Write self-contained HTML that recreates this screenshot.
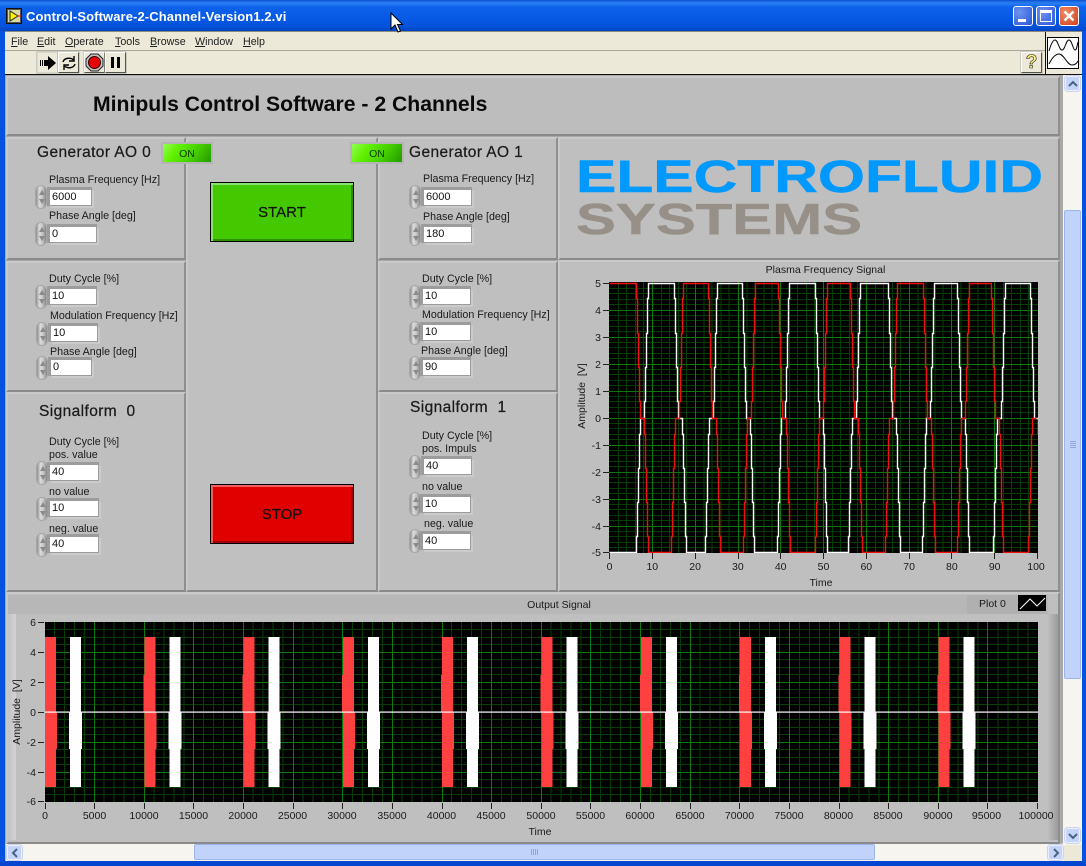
<!DOCTYPE html>
<html><head><meta charset="utf-8"><style>
*{box-sizing:border-box}
html,body{margin:0;padding:0;width:1086px;height:866px;overflow:hidden;background:#c0c0c0}
body{position:relative;font-family:"Liberation Sans",sans-serif;font-size:11px;color:#111}
div,span.a{position:absolute}
.b{background:#bfbfbf;border:2px solid;border-color:#c9c9c9 #8f8f8f #8a8a8a #c9c9c9}
.l{white-space:nowrap;line-height:14px;height:14px;font-size:10.7px;color:#1a1a1a;margin-top:1px}
.h{white-space:nowrap;font-size:15.5px;line-height:18px;height:18px;color:#1a1a1a;letter-spacing:.4px;-webkit-text-stroke:.25px #222;margin-top:1px}
.f{background:#fff;height:15px;line-height:15px;padding-left:2px;font-size:11px;box-shadow:-1px -1px 0 2px #9c9c9c,2px 2px 0 1px #cbcbcb}
.s{width:12px;height:24px;border-radius:6px;background:linear-gradient(90deg,#8f8f8f,#dcdcdc 35%,#c4c4c4 65%,#858585);border:1px solid #a5a5a5}
.s:before{content:"";position:absolute;left:3px;top:4px;border:3px solid transparent;border-bottom:5px solid #8a8a8a;border-top:0}
.s:after{content:"";position:absolute;left:3px;bottom:4px;border:3px solid transparent;border-top:5px solid #8a8a8a;border-bottom:0}
.m{top:35px;font-size:10.7px;line-height:14px;color:#222;font-family:"Liberation Sans",sans-serif}
.m u{text-decoration:underline}
.tb{width:21px;height:21px;top:52px;background:#ece9d8;border:1px solid;border-color:#fff #55534a #55534a #fff;box-shadow:0 0 0 .5px #aaa}
.led{height:18px;background:linear-gradient(125deg,#90ff50 0,#60f000 30%,#44cc00 65%,#239a00 100%);text-align:center;line-height:20px;font-size:10.5px;color:#0a3a00;box-shadow:0 0 0 2px #b4b4b4}
.big{left:210px;width:144px;height:60px;border:1px solid #000;text-align:center;font-size:15px;line-height:60px;color:#111;-webkit-text-stroke:.2px #111}
.bar{background:#c1d3fb;border:1px solid #9db4e8;border-radius:2px}
.sb{background:#c5d5f8;border:1px solid #eef;border-radius:2px;box-shadow:0 0 0 .5px #9db4e8;color:#4d6185}
svg text{font-family:"Liberation Sans",sans-serif;font-size:10.5px;fill:#1a1a1a}
.w{border-radius:3px;border:1px solid #fff;width:20px;height:20px;top:6px}
</style></head><body>

<div style="left:0;top:0;width:1086px;height:31px;background:linear-gradient(180deg,#0a50d0 0,#2a80f4 3px,#0e62ea 7px,#0658e4 20px,#0350d8 27px,#0244c0 31px)"></div>
<div style="left:0;top:31px;width:5px;height:835px;background:#0652e0"></div>
<div style="left:1082px;top:31px;width:4px;height:835px;background:#0652e0"></div>
<div style="left:0;top:861px;width:1086px;height:5px;background:#0446d0"></div>

<svg style="position:absolute;left:6px;top:8px" width="17" height="17"><rect x=".5" y=".5" width="15" height="15" fill="#555" stroke="#111"/><rect x="2" y="2" width="12" height="12" fill="#d8d8a0"/><path d="M4 3V13L12 8Z" fill="#fff200" stroke="#222"/><path d="M11 8h5" stroke="#e00"/></svg>
<div style="left:26px;top:8px;color:#fff;font-weight:bold;font-size:13px;line-height:17px;white-space:nowrap;letter-spacing:.1px">Control-Software-2-Channel-Version1.2.vi</div>

<div class="w" style="left:1013px;background:radial-gradient(circle at 30% 30%,#6d93ee,#2a56d8)"><div style="left:4px;top:12px;width:8px;height:3px;background:#fff"></div></div>
<div class="w" style="left:1036px;background:radial-gradient(circle at 30% 30%,#6d93ee,#2a56d8)"><div style="left:3px;top:3px;width:12px;height:12px;border:1px solid #fff;border-top-width:3px"></div></div>
<div class="w" style="left:1059px;background:radial-gradient(circle at 30% 30%,#ef8a66,#d0401c)"><svg style="position:absolute;left:3px;top:3px" width="12" height="12"><path d="M1.5 1.5L10.5 10.5M10.5 1.5L1.5 10.5" stroke="#fff" stroke-width="2.4"/></svg></div>

<div style="left:5px;top:31px;width:1077px;height:44px;background:#ece9d8;border-top:1px solid #8c8a80"></div>
<div style="left:5px;top:50px;width:1040px;height:1px;background:#aca899"></div>
<div style="left:5px;top:74px;width:1077px;height:1px;background:#111"></div>
<div style="left:1045px;top:32px;width:1px;height:42px;background:#111"></div>
<div class="m" style="left:11px"><u>F</u>ile</div>
<div class="m" style="left:37px"><u>E</u>dit</div>
<div class="m" style="left:65px"><u>O</u>perate</div>
<div class="m" style="left:115px"><u>T</u>ools</div>
<div class="m" style="left:150px"><u>B</u>rowse</div>
<div class="m" style="left:195px"><u>W</u>indow</div>
<div class="m" style="left:243px"><u>H</u>elp</div>

<div class="tb" style="left:37px;border-color:#d8d6c8"><svg style="position:absolute;left:1px;top:2px" width="18" height="16"><path d="M9 1L17 8L9 15V11H6V5H9Z" fill="#000"/><path d="M1 5h1v6H1zM3 5h1v6H3zM5 5h1v6H5z" fill="#000"/></svg></div>
<div class="tb" style="left:58px"><svg style="position:absolute;left:1px;top:1px" width="18" height="18" fill="none" stroke="#000" stroke-width="1.4"><path d="M3 8C4 4 10 3 14 6"/><path d="M15 10C14 14 8 15 4 12"/><path d="M14 2V7H9M4 16V11H9"/></svg></div>
<div class="tb" style="left:84px"><svg style="position:absolute;left:0;top:0" width="19" height="19"><path d="M6 1H13L18 6V13L13 18H6L1 13V6Z" fill="#c4c4c4" stroke="#222"/><circle cx="9.5" cy="9.5" r="6" fill="#e80000" stroke="#300"/></svg></div>
<div class="tb" style="left:105px"><div style="left:5px;top:4px;width:3px;height:11px;background:#000"></div><div style="left:11px;top:4px;width:3px;height:11px;background:#000"></div></div>
<div class="tb" style="left:1021px"><div style="left:0;top:0;width:19px;height:19px;text-align:center;font-weight:bold;font-size:19px;line-height:19px;color:#fff27a;-webkit-text-stroke:.6px #222">?</div></div>
<svg style="position:absolute;left:1047px;top:37px" width="32" height="32"><rect x=".5" y=".5" width="31" height="31" fill="#fff" stroke="#000"/><path d="M2 14C4 7 6 3 8 3C11 3 12 13 15 13C18 13 19 3 22 3C25 3 26 13 28 13C30 13 30 8 31 5" fill="none" stroke="#000"/><path d="M2 27C5 21 8 17 12 17C17 17 20 28 25 28C28 28 30 26 31 24" fill="none" stroke="#000"/></svg>

<div style="left:5px;top:75px;width:1058px;height:768px;background:#a8a8a8"></div>
<div class="b" style="left:6px;top:76px;width:1054px;height:60px;background:#bdbdbd"></div>
<div style="left:93px;top:92px;font-size:21.2px;font-weight:bold;line-height:26px;white-space:nowrap;color:#0a0a0a">Minipuls Control Software - 2 Channels</div>

<div class="b" style="left:6px;top:137px;width:180px;height:123px"></div>
<div class="b" style="left:6px;top:261px;width:180px;height:131px"></div>
<div class="b" style="left:6px;top:392px;width:180px;height:200px"></div>
<div class="b" style="left:186px;top:137px;width:192px;height:455px;background:#c0c0c0"></div>
<div class="b" style="left:378px;top:137px;width:180px;height:123px"></div>
<div class="b" style="left:378px;top:261px;width:180px;height:131px"></div>
<div class="b" style="left:378px;top:392px;width:180px;height:200px"></div>
<div class="b" style="left:558px;top:137px;width:502px;height:123px"></div>
<div class="b" style="left:558px;top:260px;width:502px;height:332px"></div>
<div class="b" style="left:6px;top:592px;width:1054px;height:252px"></div>
<div style="left:8px;top:595px;width:1040px;height:19px;background:#b7b7b7"></div>
<div style="left:8px;top:614px;width:8px;height:226px;background:linear-gradient(90deg,#c4c4c4,#d2d2d2)"></div>
<div style="left:1040px;top:614px;width:18px;height:226px;background:linear-gradient(90deg,#c0c0c0 40%,#9c9c9c)"></div>

<!-- Left controls -->
<div class="h" style="left:37px;top:143px">Generator AO 0</div>
<div class="led" style="left:163px;top:144px;width:48px">ON</div>
<div class="l" style="left:49px;top:172px">Plasma Frequency [Hz]</div>
<div class="s" style="left:35px;top:185px"></div><div class="f" style="left:50px;top:190px;width:41px">6000</div>
<div class="l" style="left:49px;top:208px">Phase Angle [deg]</div>
<div class="s" style="left:35px;top:222px"></div><div class="f" style="left:50px;top:227px;width:46px">0</div>

<div class="l" style="left:49px;top:271px">Duty Cycle [%]</div>
<div class="s" style="left:35px;top:285px"></div><div class="f" style="left:50px;top:289px;width:46px">10</div>
<div class="l" style="left:50px;top:308px">Modulation Frequency [Hz]</div>
<div class="s" style="left:36px;top:322px"></div><div class="f" style="left:51px;top:326px;width:46px">10</div>
<div class="l" style="left:50px;top:344px">Phase Angle [deg]</div>
<div class="s" style="left:36px;top:356px"></div><div class="f" style="left:51px;top:360px;width:40px">0</div>

<div class="h" style="left:39px;top:402px">Signalform&nbsp; 0</div>
<div class="l" style="left:49px;top:434px">Duty Cycle [%]</div>
<div class="l" style="left:49px;top:447px">pos. value</div>
<div class="s" style="left:36px;top:461px"></div><div class="f" style="left:50px;top:465px;width:48px">40</div>
<div class="l" style="left:49px;top:484px">no value</div>
<div class="s" style="left:36px;top:497px"></div><div class="f" style="left:50px;top:501px;width:48px">10</div>
<div class="l" style="left:49px;top:521px">neg. value</div>
<div class="s" style="left:36px;top:533px"></div><div class="f" style="left:50px;top:537px;width:48px">40</div>

<!-- Center -->
<div class="led" style="left:352px;top:144px;width:50px">ON</div>
<div class="big" style="top:182px;background:#44c800;box-shadow:inset 2px 2px 0 #88e070,inset -2px -2px 0 #2c9000">START</div>
<div class="big" style="top:484px;background:#e00000;box-shadow:inset 2px 2px 0 #ee6060,inset -2px -2px 0 #a00000">STOP</div>

<!-- Right controls -->
<div class="h" style="left:409px;top:143px">Generator AO 1</div>
<div class="l" style="left:423px;top:171px">Plasma Frequency [Hz]</div>
<div class="s" style="left:409px;top:185px"></div><div class="f" style="left:424px;top:190px;width:47px">6000</div>
<div class="l" style="left:423px;top:209px">Phase Angle [deg]</div>
<div class="s" style="left:409px;top:222px"></div><div class="f" style="left:424px;top:227px;width:47px">180</div>

<div class="l" style="left:422px;top:271px">Duty Cycle [%]</div>
<div class="s" style="left:409px;top:285px"></div><div class="f" style="left:423px;top:289px;width:47px">10</div>
<div class="l" style="left:422px;top:307px">Modulation Frequency [Hz]</div>
<div class="s" style="left:409px;top:321px"></div><div class="f" style="left:423px;top:325px;width:47px">10</div>
<div class="l" style="left:421px;top:343px">Phase Angle [deg]</div>
<div class="s" style="left:409px;top:356px"></div><div class="f" style="left:423px;top:360px;width:47px">90</div>

<div class="h" style="left:410px;top:398px">Signalform&nbsp; 1</div>
<div class="l" style="left:422px;top:428px">Duty Cycle [%]</div>
<div class="l" style="left:422px;top:441px">pos. Impuls</div>
<div class="s" style="left:409px;top:455px"></div><div class="f" style="left:424px;top:459px;width:47px">40</div>
<div class="l" style="left:422px;top:479px">no value</div>
<div class="s" style="left:409px;top:492px"></div><div class="f" style="left:423px;top:497px;width:47px">10</div>
<div class="l" style="left:424px;top:516px">neg. value</div>
<div class="s" style="left:409px;top:529px"></div><div class="f" style="left:423px;top:534px;width:47px">40</div>

<!-- Graphics -->
<svg style="position:absolute;left:0;top:0" width="1086" height="866">
<defs>
<path id="v1" d="M618.5 282V553M626.5 282V553M635.5 282V553M643.5 282V553" stroke="#063f06" shape-rendering="crispEdges"/>
<path id="h1" d="M609 288.5H1038M609 293.5H1038M609 299.5H1038M609 304.5H1038" stroke="#063f06" shape-rendering="crispEdges"/>
<path id="v2" d="M54.5 622V802M64.5 622V802M74.5 622V802M84.5 622V802" stroke="#063f06" shape-rendering="crispEdges"/>
<path id="h2" d="M45 629.5H1038M45 637.5H1038M45 644.5H1038" stroke="#063f06" shape-rendering="crispEdges"/>
<clipPath id="c1"><rect x="609" y="281" width="429" height="272"/></clipPath>
<clipPath id="c2"><rect x="45" y="622" width="993" height="180"/></clipPath>
<g id="br" fill="#ff4040" shape-rendering="crispEdges"><rect x="45" y="637" width="11" height="150"/><rect x="44" y="675" width="12" height="37"/><rect x="45" y="712" width="12" height="37"/></g>
<g id="bw" fill="#fff" shape-rendering="crispEdges"><rect x="70" y="637" width="11" height="150"/><rect x="69" y="712" width="13" height="37"/></g>
<g id="bb"><use href="#br"/><use href="#bw"/></g>
</defs>

<!-- Logo -->
<text x="576" y="192" textLength="467" lengthAdjust="spacingAndGlyphs" style="font-size:45px;font-weight:bold;fill:#0099ff;stroke:#0099ff;stroke-width:.5px">ELECTROFLUID</text>
<text x="576" y="234" textLength="286" lengthAdjust="spacingAndGlyphs" style="font-size:44px;font-weight:bold;fill:#979088;stroke:#979088;stroke-width:.5px">SYSTEMS</text>

<!-- Top plot -->
<text x="825.5" y="273" text-anchor="middle">Plasma Frequency Signal</text>
<rect x="609" y="282" width="429" height="271" fill="#000"/>
<use href="#v1"/><use href="#v1" x="42.8"/><use href="#v1" x="85.6"/><use href="#v1" x="128.4"/><use href="#v1" x="171.2"/><use href="#v1" x="214"/><use href="#v1" x="256.8"/><use href="#v1" x="299.6"/><use href="#v1" x="342.4"/><use href="#v1" x="385.2"/>
<use href="#h1"/><use href="#h1" y="27"/><use href="#h1" y="54"/><use href="#h1" y="81"/><use href="#h1" y="108"/><use href="#h1" y="135"/><use href="#h1" y="162"/><use href="#h1" y="189"/><use href="#h1" y="216"/><use href="#h1" y="243"/>
<path d="M652.5 282V553M695.5 282V553M738.5 282V553M780.5 282V553M823.5 282V553M866.5 282V553M909.5 282V553M951.5 282V553M994.5 282V553M609 310.5H1038M609 337.5H1038M609 364.5H1038M609 391.5H1038M609 418.5H1038M609 445.5H1038M609 472.5H1038M609 499.5H1038M609 526.5H1038" stroke="#0a7a0a" shape-rendering="crispEdges"/>
<g clip-path="url(#c1)" fill="none" stroke-width="1.4">
<path stroke="#fff" d="M609.5 552.5H636.5
v-16h1v-34h1v-34h1v-34h1v-16h4v-17h1v-34h1v-34h1v-35h1v-15H674.5
v15h1v35h1v34h1v34h1v17h4v16h1v34h1v34h1v34h1v16H705.5
v-16h1v-34h1v-34h1v-34h1v-16h4v-17h1v-34h1v-34h1v-35h1v-15H742.5
v15h1v35h1v34h1v34h1v17h4v16h1v34h1v34h1v34h1v16H777.5
v-16h1v-34h1v-34h1v-34h1v-16h4v-17h1v-34h1v-34h1v-35h1v-15H815.5
v15h1v35h1v34h1v34h1v17h4v16h1v34h1v34h1v34h1v16H848.5
v-16h1v-34h1v-34h1v-34h1v-16h4v-17h1v-34h1v-34h1v-35h1v-15H888.5
v15h1v35h1v34h1v34h1v17h4v16h1v34h1v34h1v34h1v16H922.5
v-16h1v-34h1v-34h1v-34h1v-16h4v-17h1v-34h1v-34h1v-35h1v-15H957.5
v15h1v35h1v34h1v34h1v17h4v16h1v34h1v34h1v34h1v16H993.5
v-16h1v-34h1v-34h1v-34h1v-16h4v-17h1v-34h1v-34h1v-35h1v-15H1030.5
v15h1v35h1v34h1v34h1v17h4v16"/>
<path stroke="#f01010" d="M609.5 283.5H636.5
v15h1v35h1v34h1v34h1v17h4v16h1v34h1v34h1v34h1v16H671.5
v-16h1v-34h1v-34h1v-34h1v-16h4v-17h1v-34h1v-34h1v-35h1v-15H708.5
v15h1v35h1v34h1v34h1v17h4v16h1v34h1v34h1v34h1v16H743.5
v-16h1v-34h1v-34h1v-34h1v-16h4v-17h1v-34h1v-34h1v-35h1v-15H778.5
v15h1v35h1v34h1v34h1v17h4v16h1v34h1v34h1v34h1v16H815.5
v-16h1v-34h1v-34h1v-34h1v-16h4v-17h1v-34h1v-34h1v-35h1v-15H850.5
v15h1v35h1v34h1v34h1v17h4v16h1v34h1v34h1v34h1v16H885.5
v-16h1v-34h1v-34h1v-34h1v-16h4v-17h1v-34h1v-34h1v-35h1v-15H923.5
v15h1v35h1v34h1v34h1v17h4v16h1v34h1v34h1v34h1v16H957.5
v-16h1v-34h1v-34h1v-34h1v-16h4v-17h1v-34h1v-34h1v-35h1v-15H991.5
v15h1v35h1v34h1v34h1v17h4v16h1v34h1v34h1v34h1v16H1028.5
v-16h1v-34h1v-34h1v-34h1v-16h4"/>
</g>
<path d="M603 283.5h6M603 310.5h6M603 337.5h6M603 364.5h6M603 391.5h6M603 418.5h6M603 445.5h6M603 472.5h6M603 499.5h6M603 526.5h6M603 552.5h6M609.5 553v6M652.5 553v6M695.5 553v6M738.5 553v6M780.5 553v6M823.5 553v6M866.5 553v6M909.5 553v6M951.5 553v6M994.5 553v6M1037.5 553v6" stroke="#222" fill="none"/>
<g text-anchor="end"><text x="601" y="287">5</text><text x="601" y="314">4</text><text x="601" y="341">3</text><text x="601" y="368">2</text><text x="601" y="395">1</text><text x="601" y="422">0</text><text x="601" y="449">-1</text><text x="601" y="476">-2</text><text x="601" y="503">-3</text><text x="601" y="530">-4</text><text x="601" y="556">-5</text></g>
<g text-anchor="middle"><text x="609.5" y="570">0</text><text x="652.3" y="570">10</text><text x="695.1" y="570">20</text><text x="737.9" y="570">30</text><text x="780.7" y="570">40</text><text x="823.5" y="570">50</text><text x="866.3" y="570">60</text><text x="909.1" y="570">70</text><text x="951.9" y="570">80</text><text x="994.7" y="570">90</text><text x="1036" y="570">100</text><text x="821" y="586">Time</text></g>
<text transform="translate(585,396) rotate(-90)" text-anchor="middle">Amplitude&nbsp; [V]</text>

<!-- Bottom plot -->
<text x="559" y="608" text-anchor="middle">Output Signal</text>
<rect x="967" y="595" width="79" height="19" fill="#b0b0b0"/>
<text x="979" y="607">Plot 0</text>
<rect x="1018" y="595" width="28" height="16" fill="#000"/>
<path d="M1020 609L1030 599L1037 606L1045 598" fill="none" stroke="#fff"/>
<rect x="45" y="622" width="993" height="180" fill="#000"/>
<use href="#v2"/><use href="#v2" x="49.65"/><use href="#v2" x="99.3"/><use href="#v2" x="148.95"/><use href="#v2" x="198.6"/><use href="#v2" x="248.25"/><use href="#v2" x="297.9"/><use href="#v2" x="347.55"/><use href="#v2" x="397.2"/><use href="#v2" x="446.85"/><use href="#v2" x="496.5"/><use href="#v2" x="546.15"/><use href="#v2" x="595.8"/><use href="#v2" x="645.45"/><use href="#v2" x="695.1"/><use href="#v2" x="744.75"/><use href="#v2" x="794.4"/><use href="#v2" x="844.05"/><use href="#v2" x="893.7"/><use href="#v2" x="943.35"/>
<use href="#h2"/><use href="#h2" y="30"/><use href="#h2" y="60"/><use href="#h2" y="90"/><use href="#h2" y="120"/><use href="#h2" y="150"/>
<path d="M94.5 622V802M144.5 622V802M193.5 622V802M243.5 622V802M293.5 622V802M342.5 622V802M392.5 622V802M442.5 622V802M491.5 622V802M541.5 622V802M590.5 622V802M640.5 622V802M690.5 622V802M739.5 622V802M789.5 622V802M839.5 622V802M888.5 622V802M938.5 622V802M987.5 622V802M45 652.5H1038M45 682.5H1038M45 742.5H1038M45 772.5H1038" stroke="#0a7a0a" shape-rendering="crispEdges"/>
<g clip-path="url(#c2)">
<use href="#bb"/><use href="#bb" x="99.3"/><use href="#bb" x="198.6"/><use href="#bb" x="297.9"/><use href="#bb" x="397.2"/><use href="#bb" x="496.5"/><use href="#bb" x="595.8"/><use href="#bb" x="695.1"/><use href="#bb" x="794.4"/><use href="#bb" x="893.7"/>
<rect x="45" y="711.5" width="993" height="1.2" fill="#fff"/>
</g>
<path d="M38 622.5h6M38 652.5h6M38 682.5h6M38 712.5h6M38 742.5h6M38 772.5h6M38 801.5h6M45.5 803v6M94.5 803v6M144.5 803v6M193.5 803v6M243.5 803v6M293.5 803v6M342.5 803v6M392.5 803v6M442.5 803v6M491.5 803v6M541.5 803v6M590.5 803v6M640.5 803v6M690.5 803v6M739.5 803v6M789.5 803v6M839.5 803v6M888.5 803v6M938.5 803v6M987.5 803v6M1037.5 803v6" stroke="#222" fill="none"/>
<g text-anchor="end"><text x="36" y="626">6</text><text x="36" y="656">4</text><text x="36" y="686">2</text><text x="36" y="716">0</text><text x="36" y="746">-2</text><text x="36" y="776">-4</text><text x="36" y="805">-6</text></g>
<g text-anchor="middle"><text x="45" y="819">0</text><text x="94.5" y="819">5000</text><text x="144" y="819">10000</text><text x="193.5" y="819">15000</text><text x="243" y="819">20000</text><text x="292.5" y="819">25000</text><text x="342" y="819">30000</text><text x="392" y="819">35000</text><text x="441.5" y="819">40000</text><text x="491" y="819">45000</text><text x="541" y="819">50000</text><text x="590.5" y="819">55000</text><text x="640" y="819">60000</text><text x="690" y="819">65000</text><text x="739.5" y="819">70000</text><text x="789" y="819">75000</text><text x="838.5" y="819">80000</text><text x="888" y="819">85000</text><text x="938" y="819">90000</text><text x="986.5" y="819">95000</text><text x="1036" y="819">100000</text><text x="540" y="835">Time</text></g>
<text transform="translate(20,712) rotate(-90)" text-anchor="middle">Amplitude&nbsp; [V]</text>
</svg>

<!-- Scrollbars -->
<div style="left:1063px;top:75px;width:19px;height:770px;background:#f6f5ef"></div>
<div style="left:6px;top:844px;width:1076px;height:17px;background:#f6f5ef"></div>
<div class="sb" style="left:1065px;top:76px;width:15px;height:15px"><svg style="position:absolute;left:2px;top:3px" width="10" height="8"><path d="M1 6L5 2L9 6" fill="none" stroke="#4d6185" stroke-width="2"/></svg></div>
<div class="sb" style="left:1065px;top:828px;width:15px;height:15px"><svg style="position:absolute;left:2px;top:3px" width="10" height="8"><path d="M1 2L5 6L9 2" fill="none" stroke="#4d6185" stroke-width="2"/></svg></div>
<div class="bar" style="left:1064px;top:210px;width:17px;height:469px"><div style="left:5px;top:230px;width:6px;height:7px;background:repeating-linear-gradient(180deg,#8fa6d8 0 1px,transparent 1px 2px)"></div></div>
<div class="sb" style="left:7px;top:845px;width:15px;height:15px"><svg style="position:absolute;left:3px;top:2px" width="8" height="10"><path d="M6 1L2 5L6 9" fill="none" stroke="#4d6185" stroke-width="2"/></svg></div>
<div class="sb" style="left:1048px;top:845px;width:15px;height:15px"><svg style="position:absolute;left:3px;top:2px" width="8" height="10"><path d="M2 1L6 5L2 9" fill="none" stroke="#4d6185" stroke-width="2"/></svg></div>
<div class="bar" style="left:194px;top:844px;width:681px;height:16px"><div style="left:336px;top:4px;width:7px;height:6px;background:repeating-linear-gradient(90deg,#8fa6d8 0 1px,transparent 1px 2px)"></div></div>
<div style="left:1064px;top:845px;width:18px;height:16px;background:#ece9d8"></div>

<!-- Cursor -->
<svg style="position:absolute;left:390px;top:12px" width="14" height="22"><path d="M1 1V17L5 13L8 20L10.5 19L7.5 12.5H12.5Z" fill="#fff" stroke="#000"/></svg>
</body></html>
